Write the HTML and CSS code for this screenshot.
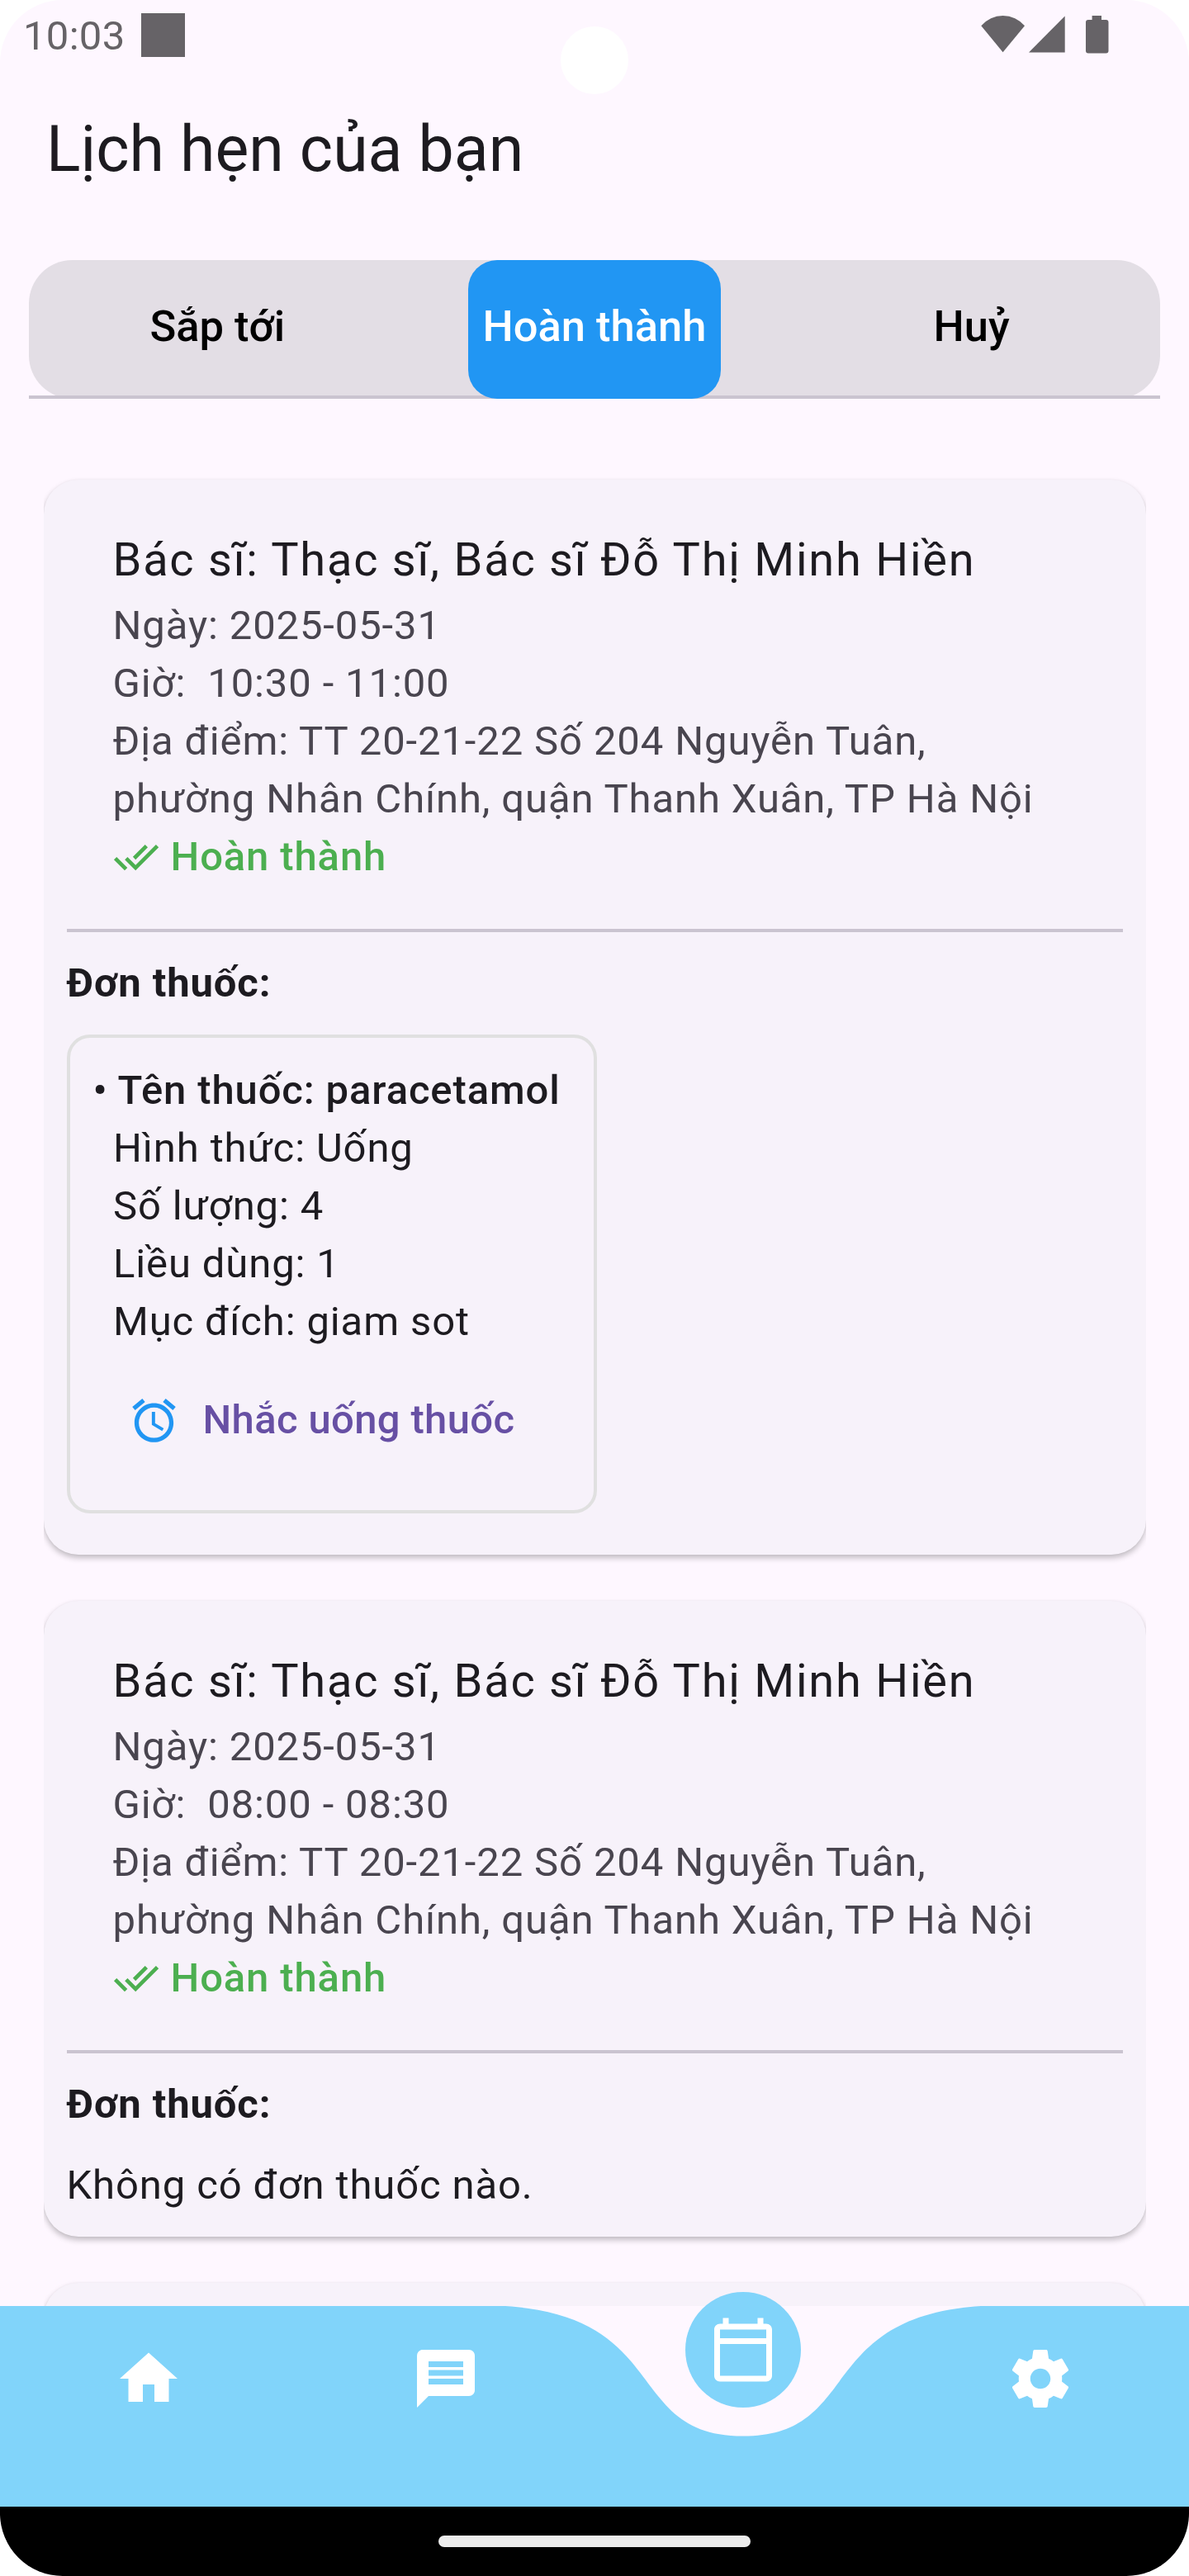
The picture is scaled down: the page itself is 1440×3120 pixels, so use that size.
FILE: index.html
```html
<!DOCTYPE html>
<html lang="vi">
<head>
<meta charset="utf-8">
<title>Lịch hẹn của bạn</title>
<link rel="stylesheet" href="styles.css">
</head>
<body>
<div class="phone">
  <div class="status">
    <span class="clock">10:03</span>
    <span class="notice"></span>
    <svg class="signals" viewBox="0 0 160 50" aria-hidden="true">
      <path d="M0.3 13.3A34.4 34.4 0 0 1 53 13.3L26.6 45.3Z"/>
      <path d="M58 45.5L101.7 1.5V45.5Z"/>
      <path d="M134.6 1h11.4v5h5.500a3 3 0 0 1 3 3v34.500a3 3 0 0 1-3 3h-21.500a3 3 0 0 1-3-3v-34.500a3 3 0 0 1 3-3h4.600z"/>
    </svg>
    <span class="camera"></span>
  </div>

  <h1 class="title">Lịch hẹn của bạn</h1>

  <nav class="tabs">
    <span class="tab">Sắp tới</span>
    <span class="tab"><span class="active">Hoàn thành</span></span>
    <span class="tab">Huỷ</span>
  </nav>

  <main class="list">
    <section class="card">
      <div class="info">
        <h2 class="doctor">Bác sĩ: Thạc sĩ, Bác sĩ Đỗ Thị Minh Hiền</h2>
        <p>Ngày: 2025-05-31</p>
        <p>Giờ:&nbsp; 10:30 - 11:00</p>
        <p>Địa điểm: TT 20-21-22 Số 204 Nguyễn Tuân,<br>phường Nhân Chính, quận Thanh Xuân, TP Hà Nội</p>
        <div class="done">
          <svg class="done-icon" viewBox="0 0 24 24"><path d="M18 7l-1.410-1.410-6.340 6.340 1.410 1.410L18 7zm4.240-1.410L11.660 16.170 7.480 12l-1.410 1.410L11.660 19l12-12-1.420-1.410zM.410 13.410L6 19l1.410-1.410L1.830 12 .410 13.410z"/></svg>
          <span>Hoàn thành</span>
        </div>
      </div>
      <h3 class="rx-title">Đơn thuốc:</h3>
      <div class="drug">
        <p class="drug-name">• Tên thuốc: paracetamol</p>
        <p class="drug-line">Hình thức: Uống</p>
        <p class="drug-line">Số lượng: 4</p>
        <p class="drug-line">Liều dùng: 1</p>
        <p class="drug-line">Mục đích: giam sot</p>
        <div class="remind">
          <svg class="alarm" viewBox="0 0 24 24"><path d="M22 5.720l-4.600-3.860-1.290 1.530 4.600 3.860L22 5.720zM7.880 3.390L6.600 1.860 2 5.710l1.290 1.530 4.590-3.850zM12.500 8H11v6l4.750 2.850.750-1.230-4-2.370V8zM12 4c-4.970 0-9 4.030-9 9s4.020 9 9 9c4.970 0 9-4.030 9-9s-4.030-9-9-9zm0 16c-3.870 0-7-3.130-7-7s3.130-7 7-7 7 3.130 7 7-3.130 7-7 7z"/></svg>
          <span>Nhắc uống thuốc</span>
        </div>
      </div>
    </section>

    <section class="card">
      <div class="info">
        <h2 class="doctor">Bác sĩ: Thạc sĩ, Bác sĩ Đỗ Thị Minh Hiền</h2>
        <p>Ngày: 2025-05-31</p>
        <p>Giờ:&nbsp; 08:00 - 08:30</p>
        <p>Địa điểm: TT 20-21-22 Số 204 Nguyễn Tuân,<br>phường Nhân Chính, quận Thanh Xuân, TP Hà Nội</p>
        <div class="done">
          <svg class="done-icon" viewBox="0 0 24 24"><path d="M18 7l-1.410-1.410-6.340 6.340 1.410 1.410L18 7zm4.240-1.410L11.660 16.170 7.480 12l-1.410 1.410L11.660 19l12-12-1.420-1.410zM.410 13.410L6 19l1.410-1.410L1.830 12 .410 13.410z"/></svg>
          <span>Hoàn thành</span>
        </div>
      </div>
      <h3 class="rx-title">Đơn thuốc:</h3>
      <p class="empty">Không có đơn thuốc nào.</p>
    </section>

    <section class="card next"></section>
  </main>

  <footer class="nav">
    <svg class="wave" viewBox="0 0 1440 243" aria-hidden="true"><path d="M0 0H612C813.6 13.1 756 157.500 900 157.500C1044 157.500 986.400 13.100 1188 0H1440V243H0Z"/></svg>
    <span class="item"><svg viewBox="0 0 24 24"><path d="M10 20v-6h4v6h5v-8h3L12 3 2 12h3v8z"/></svg></span>
    <span class="item"><svg viewBox="0 0 24 24"><path d="M20 2H4c-1.100 0-1.990.9-1.990 2L2 22l4-4h14c1.100 0 2-.9 2-2V4c0-1.100-.9-2-2-2zm-2 12H6v-2h12v2zm0-3H6V9h12v2zm0-3H6V6h12v2z"/></svg></span>
    <span class="item"><span class="bubble"><svg viewBox="0 0 24 24"><path d="M20 3h-1V1h-2v2H7V1H5v2H4c-1.100 0-2 .9-2 2v16c0 1.100.9 2 2 2h16c1.100 0 2-.9 2-2V5c0-1.100-.9-2-2-2zm0 18H4V10h16v11zm0-13H4V5h16v3z"/></svg></span></span>
    <span class="item"><svg viewBox="0 0 24 24"><path d="M19.430 12.980c.04-.32.07-.64.07-.98s-.03-.66-.07-.98l2.110-1.650c.19-.15.24-.42.12-.64l-2-3.460c-.12-.22-.39-.3-.61-.22l-2.490 1c-.52-.4-1.080-.73-1.690-.98l-.38-2.650C14.460 2.180 14.250 2 14 2h-4c-.25 0-.46.18-.49.42l-.38 2.650c-.61.25-1.170.59-1.690.98l-2.490-1c-.23-.09-.49 0-.61.22l-2 3.460c-.13.22-.07.49.12.64l2.110 1.650c-.04.32-.07.65-.07.98s.03.66.07.98l-2.110 1.650c-.19.15-.24.42-.12.64l2 3.460c.12.22.39.3.61.22l2.490-1c.52.4 1.080.73 1.690.98l.38 2.650c.03.24.24.42.49.42h4c.25 0 .46-.18.49-.42l.38-2.650c.61-.25 1.170-.59 1.690-.98l2.490 1c.23.09.49 0 .61-.22l2-3.460c.12-.22.07-.49-.12-.64l-2.110-1.650zM12 15.500c-1.930 0-3.500-1.570-3.500-3.500s1.570-3.500 3.500-3.500 3.500 1.570 3.500 3.500-1.570 3.500-3.500 3.500z"/></svg></span>
  </footer>
  <div class="gesture"><span class="pill"></span></div>
</div>
</body>
</html>
```
FILE: styles.css
```css
* { box-sizing: border-box; margin: 0; padding: 0; }

body { background: #fff; font-family: Roboto, sans-serif; }

.phone {
  position: relative;
  z-index: 0;
  width: 1440px;
  height: 3120px;
  display: flex;
  flex-direction: column;
  background: #fef7ff;
  border-radius: 76px;
  overflow: hidden;
}

/* status bar */
.status {
  position: relative;
  flex: none;
  height: 126px;
  display: flex;
  align-items: flex-start;
  padding: 0 92px 0 28px;
}
.clock { width: 143px; padding-top: 15px; font-size: 49px; line-height: 58px; letter-spacing: 0.3px; color: #666367; }
.notice { width: 53px; height: 53px; margin-top: 16px; background: #666367; }
.signals { width: 160px; height: 50px; margin: 18px 0 0 auto; fill: #666367; }
.camera {
  position: absolute;
  left: 679px;
  top: 32px;
  width: 82px;
  height: 82px;
  border-radius: 50%;
  background: #fff;
}

.title {
  flex: none;
  height: 189px;
  padding: 6px 56px 0;
  font-size: 77px;
  font-weight: 400;
  line-height: 98px;
  color: #1d1b20;
}

/* tabs */
.tabs {
  position: relative;
  flex: none;
  height: 168px;
  margin: 0 35px;
  display: grid;
  grid-template-columns: repeat(3, 1fr);
  background: linear-gradient(#cac4d0, #cac4d0) bottom / 100% 4px no-repeat;
}
.tabs::before {
  content: "";
  position: absolute;
  inset: 0;
  z-index: -1;
  border-radius: 52.5px;
  background: #e3dee5;
}
.tab {
  display: flex;
  align-items: center;
  justify-content: center;
  padding-bottom: 9px;
  font-size: 52.5px;
  font-weight: 500;
  color: #000;
}
.tab:nth-child(2) { padding: 0; }
.active {
  flex: none;
  width: 306px;
  height: 168px;
  padding-bottom: 9px;
  display: flex;
  align-items: center;
  justify-content: center;
  border-radius: 35px;
  background: #2196f3;
  color: #fff;
  white-space: nowrap;
}

/* appointments */
.list {
  flex: none;
  height: 2310px;
  margin: 0 52.5px;
  padding-top: 98px;
  display: flex;
  flex-direction: column;
  gap: 56px;
  overflow: hidden;
}
.card {
  flex: none;
  padding: 55px 28px 27px;
  border-radius: 42px;
  background: #f7f2fa;
  box-shadow: 0 4px 7px rgba(0, 0, 0, 0.24), 0 0 3px rgba(0, 0, 0, 0.04);
  font-size: 49px;
  line-height: 70px;
  letter-spacing: 0.875px;
  color: #1d1b20;
}
.card.next { height: 300px; }
.info {
  height: 493px;
  padding-left: 56px;
  border-bottom: 4px solid #cac4d0;
  color: #49454f;
}
.doctor {
  padding-bottom: 3px;
  font-size: 56px;
  font-weight: 400;
  line-height: 84px;
  letter-spacing: 1.75px;
  color: #1d1b20;
  white-space: nowrap;
}
.info p { white-space: nowrap; }
.done { display: flex; align-items: center; gap: 14px; color: #4caf50; font-weight: 500; }
.done-icon { width: 56px; height: 56px; fill: #4caf50; }
.rx-title { margin-top: 27px; font-size: 49px; font-weight: 700; }
.empty { margin-top: 28px; }

.drug {
  width: 642px;
  height: 580px;
  margin: 27px 0 22.5px;
  padding: 29px 28px 0;
  border: 4px solid #e0e0e0;
  border-radius: 28px;
  white-space: nowrap;
}
.drug-name { font-weight: 500; }
.drug-line { padding-left: 24.5px; }
.remind {
  display: flex;
  align-items: center;
  gap: 28px;
  margin-top: 49px;
  padding-left: 42px;
  letter-spacing: 0.35px;
  font-weight: 500;
  color: #6750a4;
}
.alarm { width: 63px; height: 63px; fill: #2196f3; }

/* bottom navigation */
.nav {
  position: relative;
  flex: none;
  height: 243px;
  display: grid;
  grid-template-columns: repeat(4, 1fr);
}
.wave { position: absolute; inset: 0; width: 1440px; height: 243px; fill: #81d4fa; }
.item { position: relative; display: flex; align-items: flex-start; justify-content: center; padding-top: 46px; }
.item svg { width: 84px; height: 84px; fill: #fff; }
.bubble {
  position: absolute;
  top: -17.5px;
  left: 110px;
  width: 140px;
  height: 140px;
  border-radius: 50%;
  background: #81d4fa;
  display: flex;
  align-items: center;
  justify-content: center;
}

.gesture { flex: 1; display: flex; align-items: flex-start; justify-content: center; padding-top: 35px; background: #000; }
.pill { width: 378px; height: 14px; border-radius: 7px; background: #ececec; }
```
